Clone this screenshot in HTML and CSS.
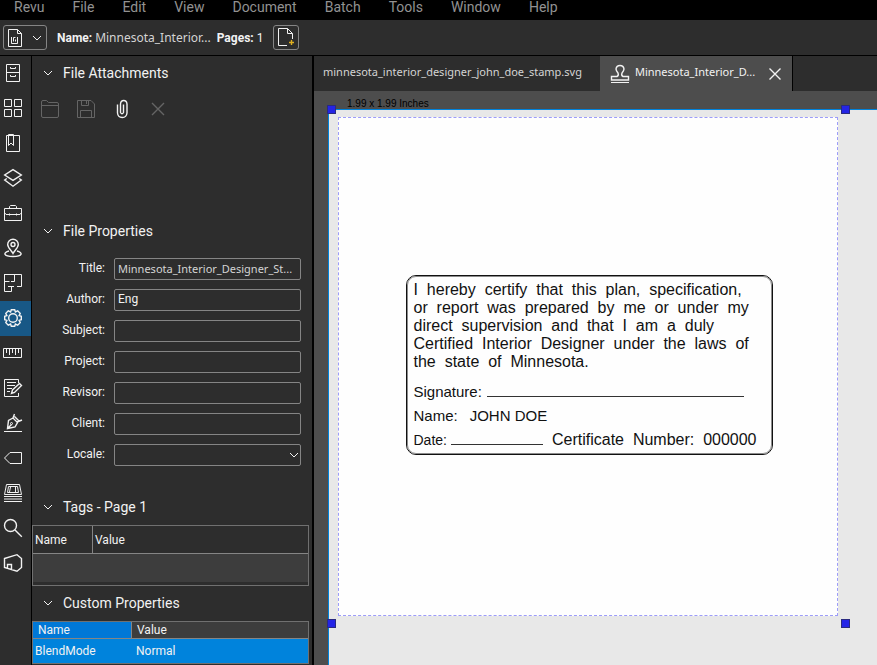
FILE: index.html
```html
<!DOCTYPE html>
<html lang="en">
<head>
<meta charset="utf-8">
<title>Revu</title>
<link rel="stylesheet" href="styles.css">
</head>
<body>
<nav class="menubar">
  <button>Revu</button><button>File</button><button>Edit</button><button>View</button><button>Document</button><button>Batch</button><button>Tools</button><button>Window</button><button>Help</button>
</nav>
<header class="toolbar">
  <button class="tool-btn doc-btn" aria-label="Document">
    <svg width="16" height="20" viewBox="0 0 16 20"><path d="M1.500 1.500h9l4 4v13h-13z M10.500 1.500v4h4"/><path d="M4.500 9v6.500h6V9 M6.500 13.500v-4h2 M8.500 11.500v2"/></svg>
    <svg width="10" height="6" viewBox="0 0 10 6"><path d="M1 1l4 4 4-4"/></svg>
  </button>
  <span class="doc-name"><b>Name:</b> <span class="file">Minnesota_Interior...</span></span>
  <span class="pages"><b>Pages:</b> 1</span>
  <button class="tool-btn page-btn" aria-label="Add page">
    <svg width="20" height="20" viewBox="0 0 20 20"><path d="M11 18.500H2.500v-17h9l5 5V12 M11.500 1.500v5h5"/><path class="gold" d="M13 15.500h5 M15.500 13v5"/></svg>
  </button>
</header>
<div class="workspace">
  <nav class="rail">
    <button aria-label="File access"><svg viewBox="0 0 18 18"><path d="M2.500.5h13v17h-13z M2.500 8.500h13 M6.500 3v1.500h5V3 M6.500 11v1.500h5V11"/></svg></button>
    <button aria-label="Thumbnails"><svg viewBox="0 0 18 18"><path d="M.5.5h7v7h-7z M10.500.5h7v7h-7z M.5 10.500h7v7h-7z M10.500 10.500h7v7h-7z"/></svg></button>
    <button aria-label="Bookmarks"><svg viewBox="0 0 18 18"><path d="M2.500 1.500h13v16h-13z M4.500.5h5v11l-2.500-2.500-2.500 2.500z"/></svg></button>
    <button aria-label="Layers"><svg class="bold" viewBox="0 0 18 18"><path d="M9 .7l8.300 5.300L9 11.300.7 6z M2.800 9.500L.7 11 9 17.200 17.300 11l-2.100-1.500"/></svg></button>
    <button aria-label="Tool chest"><svg viewBox="0 0 18 18"><path d="M.5 4.500h17v12H.5z M5.500 4.500v-2l1-1h5l1 1v2 M.5 8.500L2 10.500h14l1.500-2 M5.500 9.500v2 M12.500 9.500v2"/></svg></button>
    <button aria-label="Places"><svg class="bold" viewBox="0 0 18 18"><path d="M9 14.500C7 11 3.700 8.500 3.700 5.500a5.300 5.300 0 0 1 10.600 0C14.300 8.500 11 11 9 14.500z M5 12c-6 1.500-6 5.500 4 5.500s10-4 4-5.500"/><circle cx="9" cy="5.500" r="2"/></svg></button>
    <button aria-label="Spaces"><svg viewBox="0 0 18 18"><path d="M0 .5h17.500v12H13 M.5.5v17h7v-5 M.5 7.500h5 M10.500 .5v7H7 M4 12.500h6"/></svg></button>
    <button class="active" aria-label="Properties"><svg class="bold" viewBox="0 0 18 18"><path d="M7.300.7h3.400l.7 2.200 2.300-1.100 2.500 2.500-1.100 2.300 2.200.7v3.400l-2.200.7 1.100 2.300-2.500 2.500-2.300-1.100-.7 2.200H7.300l-.7-2.200-2.300 1.100-2.500-2.500 1.100-2.300-2.200-.7V7.300l2.200-.7-1.100-2.300 2.500-2.500 2.300 1.100z"/><circle cx="9" cy="9" r="4.300"/></svg></button>
    <button aria-label="Measurements"><svg viewBox="0 0 18 18"><path d="M-.5 4.500h18v9h-18z M2.500 5v4 M5.500 5v6 M8.500 5v4 M11.500 5v6 M14.500 5v4"/></svg></button>
    <button aria-label="Markups"><svg viewBox="0 0 18 18"><path d="M14.500 4V.5H.5v17h14V14 M3 3.500h9 M3 6.500h8 M3 9.500h5 M3 12.500h3"/><path class="bold" d="M7.500 14.500l1-3.500 7-6.500 2 2-7 7z"/></svg></button>
    <button aria-label="Signatures"><svg viewBox="0 0 18 18"><path d="M0 17.500h18"/><path class="bold" d="M3.500 14.500l1-8L9 4l4.500 4.500L11 13z M3.500 14.500l4-4 M9 4l1.500-4 M10.500 2.500l5 5 M13 8l5-2"/><circle cx="7.500" cy="9.500" r="1"/></svg></button>
    <button aria-label="Flags"><svg viewBox="0 0 18 18"><path d="M6 3.500h11.500v11H6L.5 9z"/></svg></button>
    <button aria-label="Studio"><svg viewBox="0 0 18 18"><path d="M2.500.5h13l2 10H.5z M4.500 2.500h9l1 6h-11z M6.500 3l-1 5 M11.500 3v5 M0 12.500h18 M0 15h18 M0 17.500h18"/></svg></button>
    <button aria-label="Search"><svg class="bold" viewBox="0 0 18 18"><circle cx="6.500" cy="6.500" r="6"/><path d="M11 11l6.800 6.800"/></svg></button>
    <button aria-label="3D model"><svg class="bold" viewBox="0 0 18 18"><path d="M.5 4.500L13 .7l4.500 3.800v9L13 17.200.5 13.500z M3.500 14v-3.500h4v5"/></svg></button>
  </nav>
  <aside class="panel">
    <section class="attachments">
      <h2><svg viewBox="0 0 10 6"><path d="M1 1l4 4 4-4"/></svg>File Attachments</h2>
      <div class="actions">
        <button disabled aria-label="Open"><svg width="18" height="18" viewBox="0 0 18 18"><path d="M.5 2q0-1.500 1.500-1.500h3.500l2 2H16q1.500 0 1.500 1.500v12q0 1.500-1.500 1.500H2Q.5 17.500.5 16z M.5 5.500h17"/></svg></button>
        <button disabled aria-label="Save"><svg width="18" height="18" viewBox="0 0 18 18"><path d="M.5.5H14l3.500 3.500v13.500H.5z M4.500.5v5h7v-5 M9.500 1v3 M3.500 17.500v-7h11v7"/></svg></button>
        <button aria-label="Attach"><svg width="18" height="20" viewBox="0 0 18 20"><path class="bold" d="M10.500 5.500v8q-1.500 2.500-3 0V5q.3-3.500 3.200-3.500T14 5v9q-.5 4.500-4.800 4.500T4.500 14V5.500"/></svg></button>
        <button disabled aria-label="Remove"><svg width="18" height="18" viewBox="0 0 18 18"><path class="bold" d="M3 3l12 12M15 3L3 15"/></svg></button>
      </div>
    </section>
    <section class="properties">
      <h2><svg viewBox="0 0 10 6"><path d="M1 1l4 4 4-4"/></svg>File Properties</h2>
      <form>
        <label for="title">Title:</label><input id="title" class="file" value="Minnesota_Interior_Designer_St...">
        <label for="author">Author:</label><input id="author" value="Eng">
        <label for="subject">Subject:</label><input id="subject">
        <label for="project">Project:</label><input id="project">
        <label for="revisor">Revisor:</label><input id="revisor">
        <label for="client">Client:</label><input id="client">
        <label for="locale">Locale:</label>
        <div class="select"><select id="locale"><option></option></select><svg viewBox="0 0 10 6"><path d="M1 1l4 4 4-4"/></svg></div>
      </form>
    </section>
    <section>
      <h2><svg viewBox="0 0 10 6"><path d="M1 1l4 4 4-4"/></svg>Tags - Page 1</h2>
      <table class="tags">
        <thead><tr><th>Name</th><th>Value</th></tr></thead>
        <tbody><tr><td colspan="2"></td></tr></tbody>
      </table>
    </section>
    <section>
      <h2><svg viewBox="0 0 10 6"><path d="M1 1l4 4 4-4"/></svg>Custom Properties</h2>
      <table class="custom">
        <thead><tr><th>Name</th><th>Value</th></tr></thead>
        <tbody><tr><td>BlendMode</td><td>Normal</td></tr></tbody>
      </table>
    </section>
  </aside>
  <main class="document">
    <div class="tabs">
      <button class="tab file">minnesota_interior_designer_john_doe_stamp.svg</button>
      <div class="tab current file">
        <svg width="18" height="18" viewBox="0 0 18 18"><path d="M0 17.500h18"/><path class="bold" d="M.5 15v-3.500h5.500q2-1 1-3.500-2-2.500-2-4 .5-3.500 4-3.500t4 3.500q0 1.500-2 4-1 2.500 1 3.500h5.500V15z"/></svg>
        <span>Minnesota_Interior_D...</span>
        <button aria-label="Close"><svg width="12" height="12" viewBox="0 0 12 12"><path class="bold" d="M.5.5l11 11M11.500.5l-11 11"/></svg></button>
      </div>
    </div>
    <div class="canvas">
      <div class="paper">
        <div class="selection">
          <span class="size">1.99 x 1.99 Inches</span>
          <i class="handle nw"></i><i class="handle ne"></i><i class="handle sw"></i><i class="handle se"></i>
          <div class="stamp-area">
            <div class="stamp">
              <p>I  hereby  certify  that  this  plan,  specification,
or  report  was  prepared  by  me  or  under  my
direct  supervision  and  that  I  am  a  duly
Certified  Interior  Designer  under  the  laws  of
the  state  of  Minnesota.</p>
              <div class="line sign"><span>Signature:</span><span class="rule"></span></div>
              <div class="line name"><span>Name:</span><span>JOHN DOE</span></div>
              <div class="line date"><span>Date:</span><span class="rule"></span><span class="cert">Certificate  Number:  000000</span></div>
            </div>
          </div>
        </div>
      </div>
    </div>
  </main>
</div>
</body>
</html>
```
FILE: styles.css
```css
* { box-sizing: border-box; }
body {
  margin: 0;
  height: 100vh;
  display: flex;
  flex-direction: column;
  overflow: hidden;
  background: #2d2d2d;
  color: #f2f2f2;
  font: 12px/16px Roboto, sans-serif;
}
button { font: inherit; color: inherit; background: none; border: 0; padding: 0; }
svg { display: block; fill: none; stroke: currentColor; flex: none; overflow: visible; }
.bold { stroke-width: 1.4; }
.file { font-family: "Noto Sans", sans-serif; color: #d4d4d4; }

.menubar {
  height: 20px;
  flex: none;
  display: flex;
  gap: 28px;
  padding: 0 14px 6px;
  background: #000;
  color: #929292;
  font-size: 14px;
  line-height: 14px;
}
.toolbar {
  flex: none;
  height: 36px;
  display: flex;
  align-items: center;
  padding-left: 3px;
  border-bottom: 1px solid #000;
}
.tool-btn {
  height: 25px;
  display: flex;
  align-items: center;
  justify-content: center;
  border: 1px solid #858585;
  border-radius: 3px;
}
.doc-btn { width: 44px; gap: 9px; padding-right: 2px; margin-right: 10px; }
.page-btn { width: 26px; padding-bottom: 1px; margin-left: 10px; }
.doc-name { margin-right: 6px; }
.gold { stroke: #e0b020; stroke-width: 1.4; }

.workspace { flex: 1; min-height: 0; display: flex; }
.rail { width: 32px; flex: none; border-right: 1px solid #000; }
.rail button { display: flex; align-items: center; width: 100%; height: 35px; padding: 0 0 1px 4px; }
.rail svg { width: 18px; height: 18px; }
.rail .active { background: #185886; }

.panel { width: 282px; flex: none; border-right: 2px solid #000; overflow: hidden; }
h2 {
  display: flex;
  align-items: center;
  gap: 10px;
  height: 34px;
  margin: 0;
  padding-left: 11px;
  font-size: 14px;
  font-weight: 400;
}
h2 svg, .select svg { width: 10px; height: 6px; }
.attachments { height: 158px; }
.actions { display: flex; gap: 18px; height: 38px; align-items: center; padding-left: 9px; }
.actions button:disabled { color: #656565; }
.properties { padding-bottom: 24px; }
form {
  display: grid;
  grid-template-columns: 73px 1fr;
  gap: 9px;
  padding: 10px 11px 0 0;
}
form label { text-align: right; line-height: 20px; }
input, select {
  width: 100%;
  height: 22px;
  padding: 0 3px 2px;
  background: transparent;
  border: 1px solid #858585;
  border-radius: 2px;
  color: #f2f2f2;
  font: 12px/16px Roboto, sans-serif;
  appearance: none;
}
input.file { font: 11px/16px "Noto Sans", sans-serif; color: #d4d4d4; }
.select { position: relative; }
.select svg { position: absolute; right: 2px; top: 8px; }

table {
  width: 277px;
  margin-top: 1px;
  border: 1px solid #707070;
  border-collapse: separate;
  border-spacing: 0;
  table-layout: fixed;
}
th, td { text-align: left; font-weight: 400; }
th { border-bottom: 1px solid #858585; }
th:first-child { border-right: 1px solid #858585; }
.tags th { height: 28px; padding: 0 2px; }
.tags th:first-child { width: 60px; }
.tags td { height: 31px; background: #3d3d3d; border-bottom: 3px solid #2d2d2d; }
.custom th { height: 17px; padding: 0 5px; background: #3d3d3d; }
.custom th:first-child { width: 99px; background: #0078d7; }
.custom td { height: 24px; padding: 0 2px; background: #0083dc; }
.custom td:last-child { padding-left: 4px; }

.document { flex: 1; min-width: 0; display: flex; flex-direction: column; }
.tabs { display: flex; height: 35px; flex: none; font-size: 11px; }
.tab { display: flex; align-items: center; padding: 0 18px 3px 9px; }
.current { gap: 6px; padding: 0 11px; background: #4d4d4d; border-right: 1px solid #000; color: #f2f2f2; }
.current span { padding-bottom: 3px; }
.current button { margin-left: 8px; }
.canvas { flex: 1; min-height: 0; padding: 18px 0 0 14px; background: #4d4d4d; }
.paper { height: 100%; background: #e8e8e8; border: solid #0083dc; border-width: 1px 0 0 1px; }
.selection { position: relative; width: 517px; padding: 7px 8px 7px 9px; }
.size {
  position: absolute;
  left: 18px;
  top: -12px;
  color: #000;
  font: 10px/12px "Liberation Sans", sans-serif;
}
.handle { position: absolute; width: 9px; height: 9px; background: #2424e6; border: 1px solid #2a2a80; }
.nw, .ne { top: -5px; }
.sw, .se { bottom: -5px; }
.nw, .sw { left: -2px; }
.ne, .se { right: -4px; }
.stamp-area {
  display: flex;
  align-items: center;
  justify-content: center;
  height: 499px;
  padding: 0 0 3px 2px;
  background: #fefefe;
  border: 1px dashed #9c9cf8;
}
.stamp {
  width: 367px;
  height: 180px;
  padding: 5px 7px 0;
  border: 1px solid #111;
  outline: 1px solid #8c8c8c;
  outline-offset: -2px;
  border-radius: 10px;
  color: #111;
  font: 15px/24px "Liberation Sans", sans-serif;
}
.stamp p { margin: 0 0 9px; font-size: 16px; line-height: 18px; white-space: pre; }
.line { display: flex; height: 24px; white-space: pre; }
.rule { height: 17px; border-bottom: 1px solid #333; }
.sign { gap: 5px; }
.sign .rule { width: 257px; }
.name { gap: 12px; }
.date { gap: 4px; font-size: 14px; }
.date .rule { width: 92px; }
.cert { margin-left: 5px; font-size: 16px; }
```
